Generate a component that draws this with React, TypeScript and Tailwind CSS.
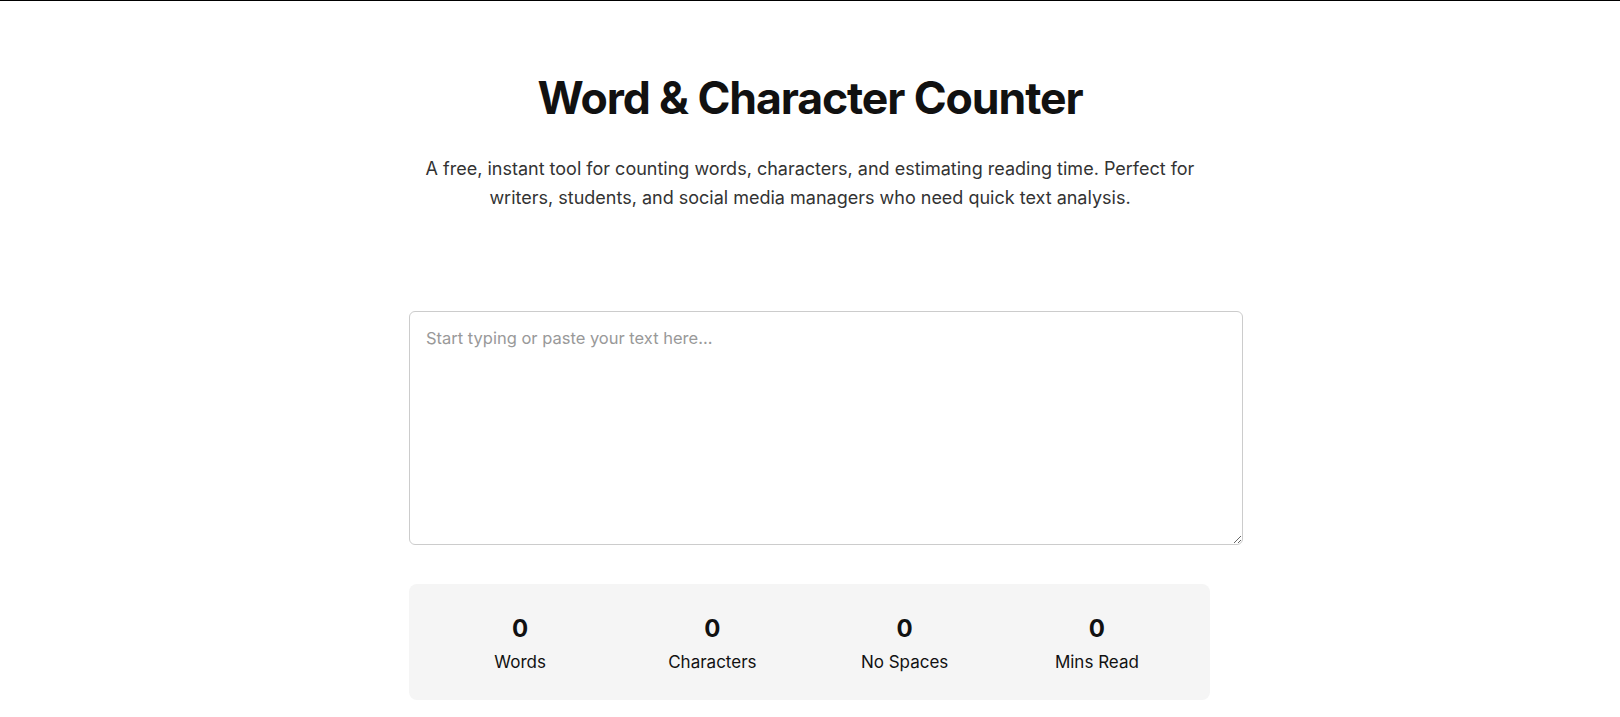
import { useState } from 'react';

const App = () => {
  const [text, setText] = useState('');

  const trimmed = text.trim();
  const words = trimmed ? trimmed.split(/\s+/).length : 0;
  const chars = text.length;
  const noSpaces = text.replace(/\s/g, '').length;
  const mins = Math.ceil(words / 200);

  const stats = [
    { value: words, label: 'Words' },
    { value: chars, label: 'Characters' },
    { value: noSpaces, label: 'No Spaces' },
    { value: mins, label: 'Mins Read' },
  ];

  return (
    <div className="min-h-screen bg-white border-t border-black font-['Inter','Noto_Sans',sans-serif] text-[#111]">
      <div className="max-w-[800px] mx-auto">
        <header className="text-center pt-[70px]">
          <h1 className="text-[44.6px] leading-[54px] font-bold tracking-tight text-[#111]">
            Word &amp; Character Counter
          </h1>
          <p className="mt-[30px] text-lg leading-[1.6] text-[#333]">
            A free, instant tool for counting words, characters, and estimating reading time. Perfect for
            writers, students, and social media managers who need quick text analysis.
          </p>
        </header>

        <textarea
          value={text}
          onChange={(e) => setText(e.target.value)}
          placeholder="Start typing or paste your text here..."
          className="box-content block w-full h-[200px] mt-[98px] -ml-px p-4 pt-[14px] pb-[18px] border border-[#ccc] rounded-md text-[16.5px] leading-6 text-[#111] placeholder:text-[#999] outline-none resize-y"
        />

        <div className="mt-[39px] -ml-px w-[801px] bg-[#f5f5f5] rounded-lg pl-[15px] pr-[17px] pt-[29px] pb-[26px] grid grid-cols-4 text-center">
          {stats.map((stat) => (
            <div key={stat.label}>
              <div className="text-2xl leading-8 font-bold text-[#111]">{stat.value}</div>
              <div className="mt-[5px] text-[17px] leading-6 text-[#111]">{stat.label}</div>
            </div>
          ))}
        </div>
      </div>
    </div>
  );
};

export default App;
